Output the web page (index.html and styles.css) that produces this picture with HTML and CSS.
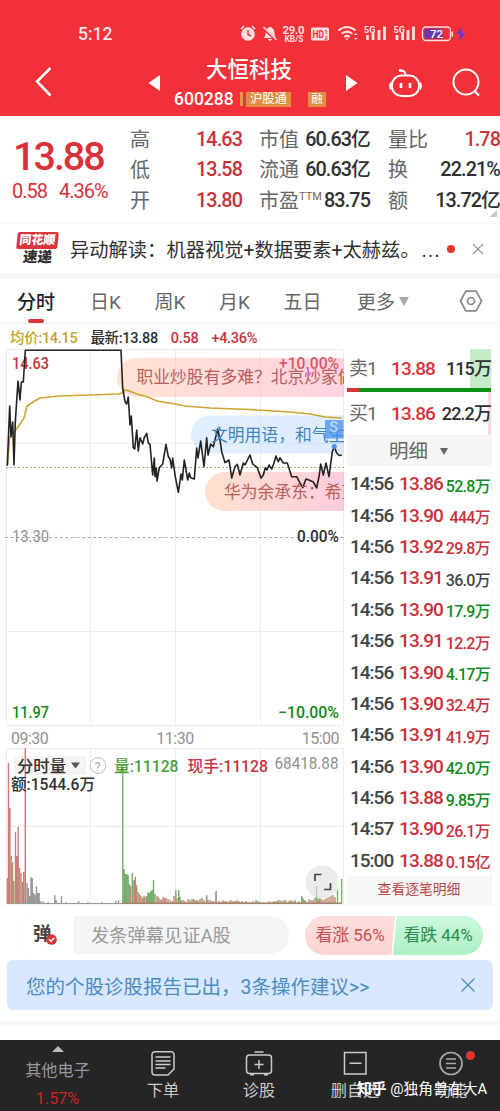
FILE: index.html
```html
<!DOCTYPE html>
<html lang="zh-CN">
<head>
    <meta charset="UTF-8">
    <meta name="viewport" content="width=device-width, initial-scale=1.0">
    <title>大恒科技 600288</title>
    <link rel="stylesheet" href="styles.css">
</head>
<body>
    <header class="header">
        <div class="status">
            <span class="clock">5:12</span>
            <svg class="status-icons" width="234" height="24" viewBox="236 22 234 24">
                <!-- alarm -->
                <circle cx="248" cy="34" r="6.8" fill="#ffdfe0"/>
                <path d="M241 29l3-3M255 29l-3-3" stroke="#ffdfe0" stroke-width="1.6"/>
                <path d="M248 30v4.500l3 1.500" fill="none" stroke="#f23038" stroke-width="1.400"/>
                <!-- muted bell -->
                <path d="M264 38c2-2 1-8 3-9 1-1 1-2 3-2s2 1 3 2c2 1 1 7 3 9zM267.500 39h5l-2.500 2z" fill="#ffdfe0"/>
                <path d="M263 28l13 12" stroke="#f23038" stroke-width="2.500"/>
                <path d="M263.500 27l13 13" stroke="#ffdfe0" stroke-width="1.200"/>
                <text class="net" x="282.500" y="33.500" textLength="22">29.0</text>
                <text class="net-unit" x="284.500" y="42" textLength="19">KB/S</text>
                <rect x="311" y="27.500" width="18" height="13" rx="1.500" fill="#ffdfe0"/>
                <text class="hd" x="312.500" y="38" textLength="11.500" lengthAdjust="spacingAndGlyphs">HD</text>
                <text class="hd-small" x="324.500" y="33.500">1</text>
                <text class="hd-small" x="324.500" y="39.500">2</text>
                <!-- wifi -->
                <g fill="none" stroke="#ffdfe0" stroke-width="2.100">
                    <path d="M338.500 30.500q8.500-7 17 0"/>
                    <path d="M341.500 33.800q5.500-4.500 11 0"/>
                    <path d="M344.300 37q2.700-2.200 5.400 0"/>
                </g>
                <path d="M345.500 38.500h3l-1.500 2zM354 35l1.800-2 1.800 2zM354 38l1.800 2 1.800-2z" fill="#ffdfe0"/>
                <!-- signal x2 -->
                <text class="sig" x="364" y="32.500">5G</text>
                <path d="M367.500 40v-5M373 40v-7M379 40v-10M384.500 40v-13.500" stroke="#ffdfe0" stroke-width="2.800"/>
                <text class="sig" x="393.500" y="32.500">5G</text>
                <path d="M397 40v-5M402.500 40v-7M408 40v-10M413.500 40v-13.500" stroke="#ffdfe0" stroke-width="2.800"/>
                <!-- battery -->
                <rect x="422.500" y="27" width="28" height="13.500" rx="3.500" fill="none" stroke="#ffdfe0" stroke-width="1.300"/>
                <rect x="424.500" y="28.800" width="18" height="10" rx="2" fill="#6a35a8"/>
                <path d="M452.300 31.500v5" stroke="#ffdfe0" stroke-width="1.500"/>
                <text class="batt" x="430" y="38">72</text>
                <path d="M461.500 27l-5 7h3.800l-1.300 7 6.500-8h-4z" fill="#6a35d8"/>
            </svg>
        </div>
        <div class="title-bar">
            <svg class="back" width="20" height="32" viewBox="0 0 20 32"><path d="M16.500 2L3 15.500 16.500 29.500" fill="none" stroke="#fff" stroke-width="2.600"/></svg>
            <svg class="prev" width="12" height="16" viewBox="0 0 12 16"><path d="M12 0v16L0.500 8z" fill="#fff"/></svg>
            <div class="stock">
                <h1 class="stock-name">大恒科技</h1>
                <div class="stock-sub">
                    <span class="stock-code">600288</span>
                    <span class="bar"></span>
                    <span class="tag">沪股通</span>
                    <span class="tag tag-margin">融</span>
                </div>
            </div>
            <svg class="next" width="12" height="16" viewBox="0 0 12 16"><path d="M0 0v16L11.500 8z" fill="#fff"/></svg>
            <svg class="robot" width="34" height="32" viewBox="0 0 34 32">
                <rect x="3" y="7.500" width="27" height="20.500" rx="9.500" fill="none" stroke="#fff" stroke-width="2"/>
                <path d="M2 14.500q-2 3.500 0 7M31 14.500q2 3.500 0 7" fill="none" stroke="#fff" stroke-width="1.800"/>
                <path d="M16.500 7.500q0-5-4.500-5" fill="none" stroke="#fff" stroke-width="2"/>
                <circle cx="11.500" cy="2.500" r="1.700" fill="#fff"/>
                <path d="M12 15v5M21 15v5" stroke="#fff" stroke-width="2.600"/>
            </svg>
            <svg class="search" width="30" height="30" viewBox="0 0 30 30">
                <circle cx="14" cy="14" r="12.500" fill="none" stroke="#fff" stroke-width="2"/>
                <path d="M22.500 23l4.500 4.500" stroke="#fff" stroke-width="2.200"/>
            </svg>
        </div>
    </header>

    <section class="quote">
        <div class="quote-price">
            <div class="price">13.88</div>
            <div class="change"><span>0.58</span><span>4.36%</span></div>
        </div>
        <dl class="stats stats-a">
            <div class="stat"><dt>高</dt><dd class="red">14.63</dd></div>
            <div class="stat"><dt>低</dt><dd class="red">13.58</dd></div>
            <div class="stat"><dt>开</dt><dd class="red">13.80</dd></div>
        </dl>
        <dl class="stats stats-b">
            <div class="stat"><dt>市值</dt><dd>60.63亿</dd></div>
            <div class="stat"><dt>流通</dt><dd>60.63亿</dd></div>
            <div class="stat"><dt>市盈<sup>TTM</sup></dt><dd>83.75</dd></div>
        </dl>
        <dl class="stats stats-c">
            <div class="stat"><dt>量比</dt><dd class="red">1.78</dd></div>
            <div class="stat"><dt>换</dt><dd>22.21%</dd></div>
            <div class="stat"><dt>额</dt><dd>13.72亿</dd></div>
        </dl>
        <span class="corner"></span>
    </section>

    <section class="news">
        <div class="news-logo">
            <span class="news-logo-top">同花顺</span>
            <span class="news-logo-bottom">速递</span>
        </div>
        <p class="news-text">异动解读：机器视觉+数据要素+太赫兹。<span class="more-dots">...</span></p>
        <span class="dot"></span>
        <svg class="news-close" width="12" height="12" viewBox="0 0 12 12"><path d="M1 1l10 10M11 1L1 11" stroke="#999" stroke-width="1.200"/></svg>
    </section>

    <nav class="tabs">
        <span class="tab active">分时</span>
        <span class="tab">日K</span>
        <span class="tab">周K</span>
        <span class="tab">月K</span>
        <span class="tab">五日</span>
        <span class="tab tab-more">更多<i class="caret"></i></span>
        <svg class="settings" width="24" height="22" viewBox="0 0 24 22">
            <path d="M6.800 1.200h10.400L22.500 11l-5.300 9.800H6.800L1.500 11z" fill="none" stroke="#888" stroke-width="1.700" stroke-linejoin="round"/>
            <circle cx="12" cy="11" r="3.500" fill="none" stroke="#888" stroke-width="1.700"/>
        </svg>
    </nav>

    <div class="legend">
        <span class="gold">均价:14.15</span>
        <span>最新:13.88</span>
        <span class="red">0.58</span>
        <span class="red">+4.36%</span>
    </div>

    <main class="main">
        <div class="charts">
            <svg class="chart" width="344" height="377" viewBox="0 349 344 377">
                <defs>
                    <linearGradient id="pill-warm" x1="0" x2="1">
                        <stop offset="0" stop-color="#ffc7a6"/>
                        <stop offset="0.500" stop-color="#ffb7b7"/>
                        <stop offset="1" stop-color="#ffa5c0"/>
                    </linearGradient>
                    <linearGradient id="pill-cool" x1="0" x2="1">
                        <stop offset="0" stop-color="#c2e0fb"/>
                        <stop offset="1" stop-color="#bdd5fc"/>
                    </linearGradient>
                </defs>
                <path class="grid" d="M6.500 349.500H343.500V725.500H6.500zM90.500 349v377M175.500 349v377M260.500 349v377M6 443.500h338M6 631.500h338"/>
                <path d="M5 537.500h339" stroke="#aaa" stroke-dasharray="3 2.500"/>
                <path d="M6 467.500h338" stroke="#b5a97a" stroke-dasharray="2 2"/>
                <!-- danmaku -->
                <path d="M344 358H136.500a19.500 19.500 0 0 0 0 39H344z" fill="url(#pill-warm)" opacity=".5"/>
                <path d="M344 415.500H210a19 19 0 0 0 0 38H344z" fill="url(#pill-cool)" opacity=".5"/>
                <path d="M344 472H224.500a19.500 19.500 0 0 0 0 39H344z" fill="url(#pill-warm)" opacity=".55"/>
                <text class="t-red" x="12" y="369" textLength="37" lengthAdjust="spacingAndGlyphs">14.63</text>
                <text class="t-red t-soft" x="279" y="369" textLength="60" lengthAdjust="spacingAndGlyphs">+10.00%</text>
                <text class="t-gray" x="12" y="542" textLength="37" lengthAdjust="spacingAndGlyphs">13.30</text>
                <text class="t-dark" x="297" y="542" textLength="42" lengthAdjust="spacingAndGlyphs">0.00%</text>
                <text class="t-green" x="12" y="718" textLength="37" lengthAdjust="spacingAndGlyphs">11.97</text>
                <text class="t-green" x="278" y="718" textLength="61" lengthAdjust="spacingAndGlyphs">−10.00%</text>
                <path class="avg" d="M7.500 465L9.700 437 15 431 20 424 24 418 27 406 33 402 40 398 60 396 90 395 118 394 122 393 125 390 132 392 137 394 148 397 157 401 175 404 185 406 210 408 250 409.500 290 412 310 414 325 417 341.500 418"/>
                <path class="last" d="M7.300 465.700L9.700 406 11 437 12.700 422 14 465 15.300 422 18 381 20 400 21.300 382 23.300 382 25.300 350.300H121L122.700 388 125 401.700 126.700 404 128.300 397 130 425 131.300 416 133.300 447.700 134.700 449 136.700 430 138.300 451 140 437.700 142.700 444 144.300 437.700 146.700 433.300 148.300 443 150 444.300 152.700 475 154.300 458 155 476.700 156.300 468 157 481 159.300 467.700 162.700 464 166 444.300 168.300 456.700 170 459 171.700 468 172.700 458 175 475 178.300 492.300 181 474 182.300 480 184.300 460 187.700 480 189.300 473 190.700 477.700 194.300 479 196.700 448 198 458 200.700 441 204 466.700 206.700 437.700 208 455 210.700 444 213.300 446.700 217.700 429 220 440 221.700 451.700 225 462.700 229 460 231.700 478 235 466.700 237.300 464.300 240 475 243.300 463 245 465 250 455 252.700 464 257.300 467.700 261 478 263.300 475 265.300 467.700 267 470 269 465 271.700 469 274 463 276 456 278.300 461.700 280 457.700 283.300 463 287.300 463 291.700 476.700 296.700 476.700 300 483 302.700 487.700 306 479 309 480 313.300 482 316.700 488 319.300 475 320.700 464 323.300 475 326 463 329 476.700 332.300 451.700 334.300 446.700 336.700 453 339 455.500 342 455"/>
                <text class="dm dm-warm" x="136.500" y="383">职业炒股有多难？北京炒家做</text>
                <text class="dm dm-cool" x="211" y="441">文明用语，和气生</text>
                <text class="dm dm-warm" x="224" y="498">华为余承东：希望</text>
                <!-- signal marker -->
                <rect x="325" y="420" width="18.500" height="18.500" fill="#4a90ea" opacity=".75"/>
                <text class="marker" x="329.500" y="432">S</text>
                <circle cx="334.300" cy="446.500" r="2.500" fill="#4a90ea"/>
            </svg>
            <div class="times"><span>09:30</span><span>11:30</span><span>15:00</span></div>
            <svg class="volume" width="344" height="157" viewBox="0 748 344 157">
                <path class="grid" d="M6.500 748.500H343.500V904H6.500zM90.500 748v156M175.500 748v156M260.500 748v156M6 826.500h338"/>
                <rect x="13" y="756" width="73" height="19" fill="#f4f4f4"/>
                <path class="bar-red" d="M7.400 904v-26M8.500 904v-141M9.900 904v-96M15.500 904v-72M16.900 904v-48M18.200 904v-77M23.700 904v-32M25.300 904v-156M21 904v-31M129.400 904v-20M133.900 904v-24M135.300 904v-27M138 904v-12M141 904v-8M145 904v-7M157 904v-8M160 904v-5M163 904v-7M166 904v-6M170 904v-4M174 904v-8M181 904v-4M185 904v-3M195 904v-4M206.500 904v-7M212 904v-3M216 904v-12M223 904v-4M231 904v-4M242 904v-3M253 904v-3M269 904v-3M280 904v-4M291 904v-4M306 904v-3M313 904v-4M317 904v-7M321 904v-5M327 904v-6M331 904v-8M335 904v-7"/>
                <path class="bar-olive" d="M11.200 904v-48M12.500 904v-42M19.600 904v-36M13.800 904v-23M130.800 904v-18M136.700 904v-19M139.500 904v-10M142.500 904v-6M144 904v-8M158.500 904v-7M161.500 904v-4M164.500 904v-6M168 904v-5M177 904v-6M183 904v-4M188 904v-5M190 904v-4M193.500 904v-5M197 904v-4M200 904v-5M202 904v-6M204 904v-4M208 904v-4M214 904v-3M219 904v-3M221 904v-2M225 904v-3M229 904v-3M233 904v-3M237 904v-4M239 904v-3M244 904v-2M250 904v-2M272 904v-2M274 904v-3M276 904v-3M282 904v-3M284 904v-4M289 904v-3M309 904v-5M315 904v-6M318.500 904v-5M323 904v-4M325 904v-5M329 904v-7M333 904v-9"/>
                <path class="bar-green" d="M122.800 904v-137M124.200 904v-35M125.500 904v-30M126.800 904v-30M128.200 904v-29M132.300 904v-31M146.600 904v-8M148 904v-12M149.400 904v-11M150.800 904v-13M152.200 904v-14M153.500 904v-24M155 904v-10M172.500 904v-3M175.800 904v-14M178.700 904v-14M180 904v-7M192 904v-5M198 904v-3M210 904v-4M226 904v-3M235 904v-3M246 904v-3M248 904v-2M256 904v-4M258 904v-3M260 904v-2M264 904v-2M278 904v-4M286 904v-4M293 904v-3M295 904v-4M299 904v-3M301.700 904v-8M303 904v-6M304.500 904v-4M311 904v-4M316.500 904v-18M319.800 904v-6M337.500 904v-14M341.600 904v-25"/>
                <path class="bar-gray" d="M22.300 904v-22M27 904v-21M28.400 904v-16M29.700 904v-8M31 904v-27M32.300 904v-26M33.700 904v-11M35 904v-9M36.500 904v-18M37.800 904v-11M39.100 904v-11M40.500 904v-3M43 904v-3M48 904v-2M54.800 904v-9M56.200 904v-4M61.500 904v-8M66 904v-2M78.500 904v-3M88 904v-2M102 904v-2M116 904v-3M118.500 904v-4M206.700 904v-9M216.200 904v-13"/>
                <path d="M7 903.500h115" stroke="#999"/>
                <path d="M122 903.300h219" stroke="#a57f6d" stroke-width="1.600"/>
                <text class="t-dark" x="17" y="771.500" textLength="49" lengthAdjust="spacingAndGlyphs">分时量</text>
                <path d="M71 762.500h9l-4.500 6z" fill="#555"/>
                <circle cx="98" cy="765.500" r="7.800" fill="none" stroke="#bbb"/>
                <text class="help" x="94.500" y="770.500">?</text>
                <text class="t-lime" x="114" y="771.500" textLength="64.500" lengthAdjust="spacingAndGlyphs">量:11128</text>
                <text class="t-red" x="187.500" y="771.500" textLength="80.500" lengthAdjust="spacingAndGlyphs">现手:11128</text>
                <text class="t-gray" x="274.500" y="768.500" textLength="64" lengthAdjust="spacingAndGlyphs">68418.88</text>
                <text class="t-dark" x="11" y="790" textLength="84" lengthAdjust="spacingAndGlyphs">额:1544.6万</text>
                <circle cx="322" cy="882" r="16.500" fill="#ddd" opacity=".6"/>
                <path d="M315 881v-6.500h6.500M330.500 883v6.500H324" fill="none" stroke="#444" stroke-width="1.700"/>
            </svg>
        </div>

        <aside class="depth">
            <div class="level sell"><span class="level-name">卖1</span><span class="level-price">13.88</span><span class="level-vol">115万</span></div>
            <div class="ratio"><i></i></div>
            <div class="level buy"><span class="level-name">买1</span><span class="level-price">13.86</span><span class="level-vol">22.2万</span></div>
            <div class="depth-head">明细<i class="caret caret-small"></i></div>
            <ul class="ticks">
                <li><span>14:56</span><b>13.86</b><em class="green">52.8万</em></li>
                <li><span>14:56</span><b>13.90</b><em class="red">444万</em></li>
                <li><span>14:56</span><b>13.92</b><em class="red">29.8万</em></li>
                <li><span>14:56</span><b>13.91</b><em>36.0万</em></li>
                <li><span>14:56</span><b>13.90</b><em class="green">17.9万</em></li>
                <li><span>14:56</span><b>13.91</b><em class="red">12.2万</em></li>
                <li><span>14:56</span><b>13.90</b><em class="green">4.17万</em></li>
                <li><span>14:56</span><b>13.90</b><em class="red">32.4万</em></li>
                <li><span>14:56</span><b>13.91</b><em class="red">41.9万</em></li>
                <li><span>14:56</span><b>13.90</b><em class="green">42.0万</em></li>
                <li><span>14:56</span><b>13.88</b><em class="green">9.85万</em></li>
                <li><span>14:57</span><b>13.90</b><em class="red">26.1万</em></li>
                <li><span>15:00</span><b>13.88</b><em class="red">0.15亿</em></li>
            </ul>
            <div class="depth-more">查看逐笔明细</div>
        </aside>
    </main>

    <section class="comment">
        <div class="comment-box">
            <span class="comment-toggle">弹
                <svg class="check" width="11" height="11" viewBox="0 0 11 11"><circle cx="5.500" cy="5.500" r="5.300" fill="#d8363b"/><path d="M3 5.300l2 2 3.200-3.300" fill="none" stroke="#fff" stroke-width="1.300"/></svg>
            </span>
            <span class="comment-input">发条弹幕见证A股</span>
        </div>
        <div class="vote">
            <span class="vote-up">看涨 56%</span>
            <span class="vote-down">看跌 44%</span>
        </div>
    </section>

    <section class="banner">
        <span>您的个股诊股报告已出，3条操作建议&gt;&gt;</span>
        <svg width="14" height="14" viewBox="0 0 14 14"><path d="M.5.500l13 13M13.500.500l-13 13" stroke="#4a8cc0" stroke-width="1.400"/></svg>
    </section>
    <div class="divider"></div>

    <footer class="toolbar">
        <div class="tool tool-index">
            <i class="caret-up"></i>
            <span class="index-name">其他电子</span>
            <span class="index-pct">1.57%</span>
        </div>
        <div class="tool">
            <svg width="28" height="28" viewBox="0 0 28 28" fill="none" stroke="#ccc" stroke-width="1.500"><path d="M6 2.700h16a3 3 0 0 1 3 3V20l-6 6H6a3 3 0 0 1-3-3V5.700a3 3 0 0 1 3-3zM6.500 8h15M6.500 12h15M6.500 15.500h15M6.500 19h10"/></svg>
            <span>下单</span>
        </div>
        <div class="tool">
            <svg width="28" height="28" viewBox="0 0 28 28" fill="none" stroke="#ccc" stroke-width="1.500"><rect x="1.500" y="6" width="25" height="18.500" rx="3"/><path d="M9.500 3h9M14 11v9M9.500 15.500h9"/><path d="M5 25.500h4M19 25.500h4" stroke-width="2"/></svg>
            <span>诊股</span>
        </div>
        <div class="tool">
            <svg width="28" height="28" viewBox="0 0 28 28" fill="none" stroke="#ccc" stroke-width="1.500"><path d="M3.500 3.500h21.500v21.500H3.500zM8.500 14.300h12"/></svg>
            <span>删自选</span>
        </div>
        <div class="tool">
            <svg width="28" height="28" viewBox="0 0 28 28" fill="none" stroke="#aaa" stroke-width="1.700"><circle cx="14" cy="14.500" r="11"/><path d="M9 10h10M9 14.500h10M9 19h10"/></svg>
            <span>功能</span>
            <i class="tool-dot"></i>
        </div>
        <span class="watermark"><b>知乎</b> @独角兽在大A</span>
    </footer>
</body>
</html>
```

FILE: styles.css
```css
:root {
    --brand: #f23038;
    --red: #c8323a;
    --green: #138a1c;
    --dark: #303030;
    --gray: #666;
    --border: #f0f0f0;
}

* {
    box-sizing: border-box;
}

body {
    margin: 0;
    width: 500px;
    height: 1111px;
    overflow: hidden;
    background: #fff;
    color: var(--dark);
    font-family: Roboto, "Noto Sans CJK SC", sans-serif;
}

h1, p, dl, dd, ul {
    margin: 0;
    padding: 0;
}

svg {
    display: block;
    flex: none;
}

i, em {
    font-style: normal;
}

.red {
    color: var(--red);
}

.green {
    color: var(--green);
}

.gold {
    color: #c9a227;
}

/* header */
.header {
    height: 116px;
    background: var(--brand);
    color: #fff;
}

.status {
    display: flex;
    align-items: center;
    justify-content: space-between;
    height: 46px;
    padding: 22px 30px 0 78px;
}

.clock {
    font-size: 17.5px;
    font-weight: 500;
    color: #ffe6e6;
}

.status-icons text {
    fill: #ffdfe0;
    font-weight: 700;
}

.status-icons .net {
    font-size: 11.5px;
}

.status-icons .net-unit {
    font-size: 8.5px;
}

.status-icons .hd {
    font-size: 10.5px;
    fill: var(--brand);
}

.status-icons .hd-small {
    font-size: 6px;
    fill: var(--brand);
}

.status-icons .sig {
    font-size: 9px;
}

.status-icons .batt {
    font-size: 11.5px;
    fill: #fff;
    font-weight: 500;
}

.title-bar {
    display: flex;
    height: 70px;
    padding-left: 34px;
}

.back {
    margin-top: 20px;
}

.prev {
    margin: 29px 0 0 94px;
}

.stock {
    width: 152px;
    margin-left: 14px;
}

.stock-name {
    margin-top: 10px;
    font-size: 21.5px;
    line-height: 28px;
    font-weight: 500;
    text-align: center;
    padding-right: 7px;
    padding-left: 5px;
}

.stock-sub {
    display: flex;
    align-items: center;
    height: 20px;
    margin-top: 5px;
    white-space: nowrap;
}

.stock-code {
    width: 60px;
    font-size: 17.5px;
    font-weight: 500;
}

.bar {
    width: 3px;
    height: 14px;
    margin-left: 6px;
    background: #e8954a;
}

.tag {
    width: 46px;
    margin-left: 3px;
    font-size: 12.3px;
    line-height: 15px;
    text-align: center;
    background: #df8f45;
}

.tag-margin {
    width: 18px;
    margin-left: 17px;
    font-size: 11.5px;
}

.next {
    margin: 29px 0 0 20px;
}

.robot {
    margin: 22px 0 0 31px;
}

.search {
    margin: 22px 0 0 29px;
}

/* quote */
.quote {
    position: relative;
    display: flex;
    height: 108px;
    padding-top: 9px;
    border-bottom: 1px solid #f6f6f6;
}

.quote-price {
    width: 122px;
    padding: 9px 0 0 13px;
    color: #d8323a;
}

.price {
    font-size: 39.5px;
    line-height: 46px;
    font-weight: 500;
    letter-spacing: -2px;
}

.change {
    display: flex;
    gap: 12px;
    margin-left: -1px;
    font-size: 20px;
    line-height: 22px;
    letter-spacing: -1px;
}

.stats {
    font-size: 20px;
}

.stats-a {
    width: 112px;
    margin-left: 8px;
}

.stats-b {
    width: 111px;
    margin-left: 17px;
}

.stats-c {
    width: 112px;
    margin-left: 18px;
}

.stat {
    display: flex;
    justify-content: space-between;
    line-height: 30.3px;
    white-space: nowrap;
}

.stat dt {
    color: var(--gray);
}

.stat dd {
    font-size: 19.8px;
    font-weight: 500;
    letter-spacing: -0.9px;
}

.stat sup {
    font-size: 11px;
    line-height: 0;
}

.corner {
    position: absolute;
    right: 3px;
    bottom: 6px;
    border-left: 8px solid transparent;
    border-bottom: 7px solid #c8c8c8;
}

/* news */
.news {
    display: flex;
    align-items: center;
    height: 55px;
    padding-left: 17px;
    border-bottom: 6px solid #f5f5f5;
}

.news-logo {
    width: 41px;
    margin-right: 12px;
    font-weight: 900;
    line-height: 17px;
    text-align: center;
}

.news-logo-top {
    display: block;
    background: #d8363b;
    color: #fff;
    font-size: 12px;
    border-radius: 2px;
    transform: skewX(-6deg);
}

.news-logo-bottom {
    display: block;
    font-size: 14.5px;
    transform: skewX(-6deg);
}

.news-text {
    width: 372px;
    font-size: 19.3px;
    white-space: nowrap;
}

.more-dots {
    margin-left: 2px;
    letter-spacing: 1.3px;
}

.dot {
    width: 8px;
    height: 8px;
    margin-left: 5px;
    border-radius: 50%;
    background: #e5342f;
}

.news-close {
    margin-left: 17px;
}

/* tabs */
.tabs {
    display: flex;
    align-items: center;
    height: 45px;
    padding-left: 17px;
    border-bottom: 1px solid var(--border);
    font-size: 19px;
    color: var(--gray);
}

.tab {
    position: relative;
    width: 64.5px;
    height: 44px;
    line-height: 47px;
}

.tab:first-child {
    width: 73px;
}

.tab.active {
    color: #222;
    font-weight: 500;
}

.tab.active::after {
    content: "";
    position: absolute;
    left: 11px;
    bottom: 0;
    width: 16px;
    height: 4px;
    border-radius: 2px;
    background: #d8323a;
}

.tab-more {
    width: 99px;
    margin-left: 9px;
}

.caret {
    display: inline-block;
    margin-left: 4px;
    vertical-align: 3px;
    border: 5.5px solid transparent;
    border-top: 9px solid #aaa;
    border-bottom: 0;
}

.settings {
    margin-left: 3px;
}

/* legend */
.legend {
    display: flex;
    gap: 13px;
    height: 25px;
    padding-left: 10px;
    font-size: 14.5px;
    line-height: 30px;
    font-weight: 500;
    letter-spacing: -0.3px;
}

/* charts */
.main {
    display: flex;
    height: 556px;
}

.charts {
    width: 344px;
}

.grid {
    fill: none;
    stroke: #ececec;
}

.avg {
    fill: none;
    stroke: #cfa42e;
    stroke-width: 1.6;
}

.last {
    fill: none;
    stroke: #222;
    stroke-width: 1.6;
    stroke-linejoin: round;
}

.chart text,
.volume text {
    font-size: 16px;
    font-weight: 500;
}

.chart .dm {
    font-size: 16.8px;
    font-weight: 400;
}

.dm-warm {
    fill: #b8605c;
}

.dm-cool {
    fill: #3f84bd;
}

.chart .marker {
    font-size: 14px;
    fill: #b8dcff;
}

.t-red {
    fill: var(--red);
}

.t-soft {
    opacity: 0.75;
}

.t-green {
    fill: var(--green);
}

.t-lime {
    fill: #4a9e35;
}

.t-dark {
    fill: var(--dark);
}

.chart .t-gray,
.volume .t-gray {
    fill: #909090;
    font-weight: 400;
}

.volume .help {
    font-size: 13px;
    font-weight: 400;
    fill: #aaa;
}

.times {
    display: flex;
    justify-content: space-between;
    height: 22px;
    padding: 0 5px 0 11px;
    font-size: 16px;
    line-height: 25px;
    letter-spacing: -0.5px;
    color: #909090;
}

.bar-red,
.bar-olive,
.bar-green,
.bar-gray {
    fill: none;
    stroke-width: 1.4;
}

.bar-red {
    stroke: #cf7b7b;
}

.bar-olive {
    stroke: #b09468;
}

.bar-green {
    stroke: #78b070;
}

.bar-gray {
    stroke: #999;
}

/* depth */
.depth {
    width: 148px;
    padding-left: 3px;
    border-right: 1px solid #f4f4f4;
}

.level {
    display: flex;
    align-items: center;
    justify-content: space-between;
    height: 39px;
    padding-left: 2px;
    font-size: 19px;
    line-height: 43px;
    letter-spacing: -0.9px;
    white-space: nowrap;
}

.sell {
    background: linear-gradient(#c5ebc8, #c5ebc8) right / 21px 100% no-repeat;
}

.buy {
    height: 43px;
    line-height: 40px;
    background: linear-gradient(#fbd9de, #fbd9de) right / 3px 100% no-repeat;
}

.level-name {
    width: 42px;
    color: var(--gray);
}

.level-price {
    width: 44px;
    color: #d8323a;
    font-weight: 500;
}

.level-vol {
    flex: 1;
    text-align: right;
    font-size: 18px;
    font-weight: 500;
}

.ratio {
    height: 4px;
    background: #0d9218;
}

.ratio i {
    display: block;
    width: 12px;
    height: 4px;
    background: #d8323a;
}

.depth-head {
    height: 31px;
    background: #f5f5f5;
    color: var(--gray);
    font-size: 19.5px;
    line-height: 33px;
    text-align: center;
    padding-right: 1px;
}

.caret-small {
    margin-left: 12px;
    border-width: 4.5px;
    border-top: 7px solid #666;
    border-bottom: 0;
}

.ticks {
    list-style: none;
    padding-top: 2px;
}

.ticks li {
    display: flex;
    align-items: center;
    height: 31.4px;
    padding: 0 1px 0 3px;
    font-size: 19px;
    font-weight: 500;
    letter-spacing: -0.9px;
    color: #444;
    white-space: nowrap;
}

.ticks span {
    width: 49px;
    letter-spacing: -1px;
}

.ticks b {
    width: 44px;
    font-weight: 500;
    color: var(--red);
}

.ticks em {
    flex: 1;
    font-size: 16px;
    letter-spacing: -0.7px;
    text-align: right;
    padding-top: 2px;
}

.depth-more {
    height: 29px;
    background: #f7f7f7;
    font-size: 13.8px;
    line-height: 26px;
    text-align: center;
    color: #b9474b;
}

/* comment */
.comment {
    display: flex;
    height: 55px;
    padding: 10px 16px 6px;
    border-top: 1px solid #faf8ec;
}

.comment-box {
    display: flex;
    width: 273px;
    border-radius: 20px;
    overflow: hidden;
    background: #f4f4f4;
    line-height: 39px;
}

.comment-toggle {
    position: relative;
    width: 58px;
    padding-left: 17px;
    background: #fff;
    font-size: 18.5px;
    line-height: 36px;
    font-weight: 700;
    color: #444;
}

.check {
    position: absolute;
    left: 30px;
    top: 18px;
}

.comment-input {
    padding-left: 17px;
    font-size: 18.3px;
    color: #999;
}

.vote {
    display: flex;
    width: 178px;
    height: 39px;
    margin-left: 16px;
    border-radius: 20px;
    overflow: hidden;
    font-size: 17px;
    line-height: 39px;
    text-align: center;
    letter-spacing: -0.1px;
}

.vote-up {
    width: 90px;
    background: linear-gradient(#fddede, #fbd3d1);
    color: #c65050;
    clip-path: polygon(0 0, 100% 0, 96% 100%, 0 100%);
}

.vote-down {
    width: 90px;
    margin-left: -2px;
    background: linear-gradient(#ccf8dc, #aef0c4);
    color: #2a8c50;
    clip-path: polygon(4% 0, 100% 0, 100% 100%, 0 100%);
}

/* banner */
.banner {
    display: flex;
    align-items: center;
    justify-content: space-between;
    height: 50px;
    margin: 0 7px;
    padding: 0 18px 0 19px;
    border-radius: 6px;
    background: #d8e7fd;
    color: #4a8cc0;
    font-size: 19.5px;
}

.divider {
    height: 30px;
    background: linear-gradient(#f6f6f6, #f6f6f6) 0 11px / 100% 4px no-repeat;
}

/* toolbar */
.toolbar {
    position: relative;
    display: flex;
    height: 71px;
    background: #252525;
    color: #ccc;
    font-size: 16.2px;
}

.tool {
    position: relative;
    display: flex;
    flex-direction: column;
    align-items: center;
    width: 96px;
    padding-top: 9px;
    line-height: 27px;
}

.tool-index {
    width: 115px;
    padding-top: 6px;
}

.caret-up {
    border: 6px solid transparent;
    border-top: 0;
    border-bottom: 6px solid #bbb;
}

.index-name {
    margin-top: 5px;
    color: #999;
}

.index-pct {
    margin-top: 1px;
    color: #d02424;
}

.tool-dot {
    position: absolute;
    left: 63px;
    top: 11px;
    width: 9px;
    height: 9px;
    border-radius: 50%;
    background: #e5342f;
}

.watermark {
    position: absolute;
    left: 357px;
    top: 37px;
    color: #fff;
    font-size: 14.8px;
    line-height: 24px;
    white-space: nowrap;
}
```
